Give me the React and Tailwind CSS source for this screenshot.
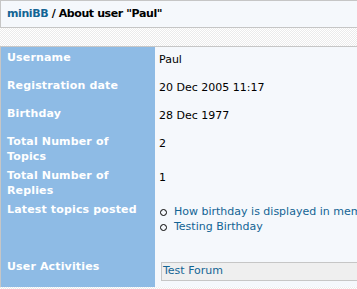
export default function App() {
  const font = "font-['DejaVu_Sans',Verdana,sans-serif]";
  const label = "w-[154px] shrink-0 bg-[#8ebbe5] text-white font-bold text-[11px] leading-[15px] pl-[6px] pt-[3px] pr-[4px] tracking-[0.15px]";
  const value = "flex-1 bg-[#f5f8fc] text-black text-[11px] leading-[15px] pl-[4px] pt-[5px]";
  const rows = [
    { l: ["Username"], v: "Paul", h: "h-[28px]" },
    { l: ["Registration date"], v: "20 Dec 2005 11:17", h: "h-[28px]" },
    { l: ["Birthday"], v: "28 Dec 1977", h: "h-[28px]" },
    { l: ["Total Number of", "Topics"], v: "2", h: "h-[34px]" },
    { l: ["Total Number of", "Replies"], v: "1", h: "h-[34px]" },
  ];
  const topics = ["How birthday is displayed in member's profile", "Testing Birthday"];
  return (
    <div
      className={`w-[357px] h-[289px] overflow-hidden ${font} bg-[repeating-conic-gradient(#ebebeb_0%_25%,#ffffff_0%_50%)] bg-[length:2px_2px]`}
    >
      <div className="w-[620px]">
        <div className="h-[28px] border-t border-l border-b border-[#c6c6c6] bg-[#f5f8fc] pl-[6px] pt-[6px] text-[11px] leading-[14px] font-bold text-black tracking-[-0.4px]">
          <span className="text-[#136494]">miniBB</span> / About user "Paul"
        </div>
        <div className="h-[18px]" />
        <div className="border-t border-l border-[#c6c6c6]">
          {rows.map((r) => (
            <div key={r.l.join(" ")} className={`flex ${r.h}`}>
              <div className={label}>
                {r.l.map((t) => (
                  <div key={t}>{t}</div>
                ))}
              </div>
              <div className={value}>{r.v}</div>
            </div>
          ))}
          <div className="flex h-[57px]">
            <div className={label}>Latest topics posted</div>
            <div className={`${value} pl-[5px]`}>
              <div className="flex flex-col text-[#136494]">
                {topics.map((t) => (
                  <div key={t} className="flex items-center">
                    <span className="w-[7px] h-[7px] rounded-full border border-black shrink-0 mr-[7px] mt-[1px]" />
                    <span className="whitespace-nowrap">{t}</span>
                  </div>
                ))}
              </div>
            </div>
          </div>
          <div className="flex h-[31px]">
            <div className={label}>User Activities</div>
            <div className="flex-1 bg-[#f5f8fc] pl-[6px] pt-[6px]">
              <div className="h-[19px] border border-[#c6c6c6] bg-[#efefef] pl-[1px] text-[11px] leading-[16px] text-[#136494]">
                Test Forum
              </div>
            </div>
          </div>
        </div>
      </div>
    </div>
  );
}
